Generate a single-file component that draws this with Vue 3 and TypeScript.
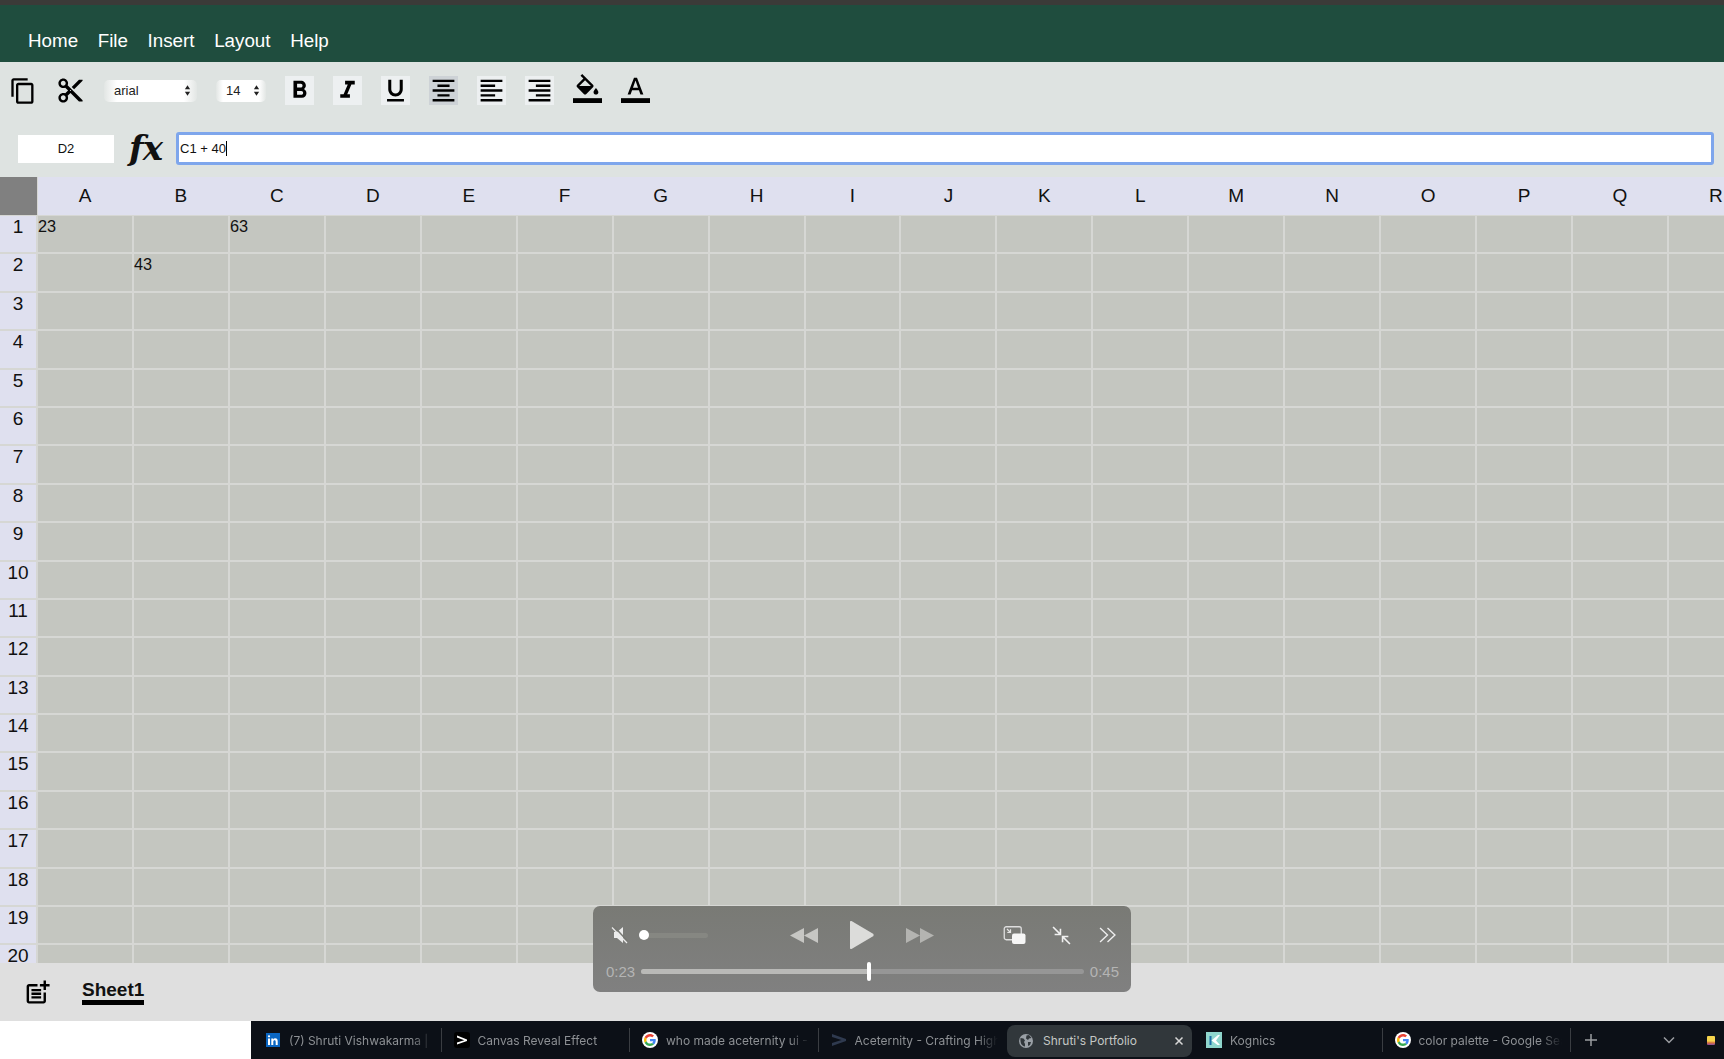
<script setup lang="ts">
const menus = ['Home', 'File', 'Insert', 'Layout', 'Help']

const toolButtons = [
  { name: 'bold', d: 'M15.6 10.79c.97-.67 1.65-1.77 1.65-2.79 0-2.26-1.75-4-4-4H7v14h7.04c2.09 0 3.71-1.7 3.71-3.79 0-1.52-.86-2.82-2.15-3.42zM10 6.5h3c.83 0 1.5.67 1.5 1.5s-.67 1.5-1.5 1.5h-3v-3zm3.5 9H10v-3h3.5c.83 0 1.5.67 1.5 1.5s-.67 1.5-1.5 1.5z' },
  { name: 'italic', d: 'M10 4v3h2.21l-3.42 8H6v3h8v-3h-2.21l3.42-8H18V4z' },
  { name: 'underline', d: 'M12 17c3.31 0 6-2.69 6-6V3h-2.5v8c0 1.93-1.57 3.5-3.5 3.5S8.5 12.93 8.5 11V3H6v8c0 3.31 2.69 6 6 6zm-7 2v2h14v-2H5z' },
  { name: 'center', active: true, d: 'M7 15v2h10v-2H7zm-4 6h18v-2H3v2zm0-8h18v-2H3v2zm4-6v2h10V7H7zM3 3v2h18V3H3z' },
  { name: 'left', d: 'M15 15H3v2h12v-2zm0-8H3v2h12V7zM3 13h18v-2H3v2zm0 8h18v-2H3v2zM3 3v2h18V3H3z' },
  { name: 'right', d: 'M3 21h18v-2H3v2zm6-4h12v-2H9v2zm-6-4h18v-2H3v2zm6-4h12V7H9v2zM3 3v2h18V3H3z' },
]

const columns = 'ABCDEFGHIJKLMNOPQRS'.split('')
const rows = Array.from({ length: 21 }, (_, i) => i + 1)
const values: Record<string, string> = { A1: '23', C1: '63', B2: '43' }

const tabs = [
  { title: '(7) Shruti Vishwakarma | LinkedIn', icon: 'linkedin', sep: true },
  { title: 'Canvas Reveal Effect', icon: 'canvas', sep: true },
  { title: 'who made aceternity ui - Google', icon: 'google', sep: true },
  { title: 'Aceternity - Crafting High Quality', icon: 'aceternity', sep: false },
  { title: "Shruti's Portfolio", icon: 'globe', sep: false, active: true },
  { title: 'Kognics', icon: 'kognics', sep: true },
  { title: 'color palette - Google Search', icon: 'google', sep: true },
]
</script>

<template>
  <div class="page">
    <div class="top-strip" />
    <nav class="menu">
      <span v-for="item in menus" :key="item">{{ item }}</span>
    </nav>

    <section class="toolbar">
      <div class="tools">
        <svg class="tool-icon" viewBox="0 0 24 24"><path d="M16 1H4c-1.1 0-2 .9-2 2v14h2V3h12V1zm3 4H8c-1.1 0-2 .9-2 2v14c0 1.1.9 2 2 2h11c1.1 0 2-.9 2-2V7c0-1.1-.9-2-2-2zm0 16H8V7h11v14z" /></svg>
        <svg class="tool-icon cut" viewBox="0 0 24 24"><path d="M9.64 7.64c.23-.5.36-1.05.36-1.64 0-2.21-1.79-4-4-4S2 3.79 2 6s1.79 4 4 4c.59 0 1.14-.13 1.64-.36L10 12l-2.36 2.36C7.14 14.13 6.59 14 6 14c-2.21 0-4 1.79-4 4s1.79 4 4 4 4-1.79 4-4c0-.59-.13-1.14-.36-1.64L12 14l7 7h3v-1L9.64 7.64zM6 8c-1.1 0-2-.89-2-2s.9-2 2-2 2 .89 2 2-.9 2-2 2zm0 12c-1.1 0-2-.89-2-2s.9-2 2-2 2 .89 2 2-.9 2-2 2zm6-7.5c-.28 0-.5-.22-.5-.5s.22-.5.5-.5.5.22.5.5-.22.5-.5.5zM19 3l-6 6 2 2 7-7V3z" /></svg>
        <div class="select font-select">
          <span>arial</span>
          <svg class="stepper" viewBox="0 0 8 14"><path d="M4 1l3 4.5H1zM4 13L1 8.500h6z" /></svg>
        </div>
        <div class="select size-select">
          <span>14</span>
          <svg class="stepper" viewBox="0 0 8 14"><path d="M4 1l3 4.5H1zM4 13L1 8.500h6z" /></svg>
        </div>
        <button
          v-for="btn in toolButtons"
          :key="btn.name"
          class="tool-btn"
          :class="{ active: btn.active }"
        >
          <svg viewBox="0 0 24 24"><path :d="btn.d" /></svg>
        </button>
        <svg class="swatch" viewBox="0 0 24 24">
          <path d="M16.56 8.94L7.62 0 6.21 1.41l2.38 2.38-5.15 5.15c-.59.59-.59 1.54 0 2.12l5.5 5.5c.29.29.68.44 1.06.44s.77-.15 1.06-.44l5.5-5.5c.59-.58.59-1.53 0-2.12zM5.21 10L10 5.21 14.79 10H5.21zM19 11.500s-2 2.170-2 3.500c0 1.100.9 2 2 2s2-.9 2-2c0-1.330-2-3.500-2-3.500z" />
          <path d="M5.210 10h9.580L10 14.790z" />
          <path d="M0 20h24v4H0z" />
        </svg>
        <svg class="swatch" viewBox="0 0 24 24">
          <path d="M0 20h24v4H0z" />
          <path d="M5.490 17h2.420l1.270-3.580h5.650L16.090 17h2.420L13.250 3h-2.500L5.490 17zm4.420-5.610l2.030-5.790h.12l2.030 5.790H9.910z" />
        </svg>
      </div>

      <div class="formula-row">
        <div class="name-box">D2</div>
        <span class="fx">fx</span>
        <div class="formula-input">C1 + 40<i class="caret" /></div>
      </div>
    </section>

    <main class="sheet">
      <div class="corner" />
      <div v-for="col in columns" :key="col" class="col-head">{{ col }}</div>
      <template v-for="row in rows" :key="row">
        <div class="row-head">{{ row }}</div>
        <div v-for="col in columns" :key="col + row" class="cell">{{ values[col + row] }}</div>
      </template>
    </main>

    <footer class="sheet-bar">
      <svg class="add-sheet" viewBox="0 0 24 24">
        <path d="M17 19.220H5V7h7V5H5c-1.100 0-2 .9-2 2v12c0 1.100.9 2 2 2h12c1.100 0 2-.9 2-2v-7h-2v7.220z" />
        <path d="M19 2h-2v3h-3c.01.01 0 2 0 2h3v2.990c.01.01 2 0 2 0V7h3V5h-3V2zM7 9h8v2H7zM7 12v2h8v-2H7zM7 15h8v2H7z" />
      </svg>
      <span class="sheet-name">Sheet1</span>
    </footer>

    <div class="tabs-row">
      <div class="blank" />
      <div class="tabs">
        <template v-for="tab in tabs" :key="tab.title">
          <div class="tab" :class="{ active: tab.active }">
            <svg v-if="tab.icon === 'linkedin'" class="fav" viewBox="0 0 16 16">
              <rect x="1" y="1" width="14" height="14" fill="#0a66c2" />
              <path fill="#fff" d="M3 6.500h2V13H3zM4 3.200a1.150 1.150 0 110 2.300 1.150 1.150 0 010-2.300zM6.300 6.500h1.900v.9c.4-.65 1.100-1.050 2-1.050 1.800 0 2.500 1.100 2.500 2.900V13h-2V9.700c0-.9-.3-1.550-1.100-1.550-.9 0-1.300.65-1.300 1.600V13h-2z" />
            </svg>
            <svg v-else-if="tab.icon === 'canvas'" class="fav" viewBox="0 0 16 16">
              <rect width="16" height="16" rx="3" fill="#000" />
              <path d="M3 3.500L13 7.500v1.500L3 12.500v-2L10.300 8.200 3 5.500z" fill="#fff" />
            </svg>
            <svg v-else-if="tab.icon === 'google'" class="fav" viewBox="-8 -8 64 64">
              <circle cx="24" cy="24" r="32" fill="#fff" />
              <path fill="#EA4335" d="M24 9.500c3.540 0 6.710 1.220 9.210 3.600l6.850-6.850C35.900 2.380 30.470 0 24 0 14.620 0 6.510 5.380 2.560 13.220l7.980 6.190C12.430 13.720 17.740 9.500 24 9.500z" />
              <path fill="#4285F4" d="M46.980 24.550c0-1.570-.15-3.090-.38-4.550H24v9.020h12.940c-.58 2.960-2.260 5.480-4.780 7.180l7.730 6c4.510-4.180 7.090-10.360 7.090-17.650z" />
              <path fill="#FBBC05" d="M10.530 28.590c-.48-1.450-.76-2.990-.76-4.590s.27-3.140.76-4.590l-7.980-6.190C.92 16.460 0 20.120 0 24c0 3.880.92 7.540 2.560 10.780l7.970-6.190z" />
              <path fill="#34A853" d="M24 48c6.480 0 11.930-2.130 15.890-5.810l-7.730-6c-2.150 1.450-4.920 2.300-8.160 2.300-6.260 0-11.570-4.220-13.470-9.910l-7.980 6.190C6.510 42.620 14.620 48 24 48z" />
            </svg>
            <svg v-else-if="tab.icon === 'aceternity'" class="fav" viewBox="0 0 16 16">
              <path d="M1 2l14 5v2L1 14v-3l9.500-3L1 5z" fill="#2f3a4f" />
            </svg>
            <svg v-else-if="tab.icon === 'globe'" class="fav" viewBox="0 0 16 16">
              <circle cx="8" cy="8" r="7" fill="#9aa0a6" />
              <path fill="#31373b" d="M2.500 5l3 .5 1.500 2-1 1.500 1 2v2.500C4 13 2 10.500 2.500 5zM8.500 2.500L11 2l2.500 3-2.500.5-1 1.500-2-1.500zM10 9h3l-1 3-2 1z" />
            </svg>
            <svg v-else class="fav" viewBox="0 0 16 16">
              <rect width="16" height="16" fill="#8fd6cd" />
              <path d="M3.500 4h2v9h-2z" fill="#1c6fa8" />
              <path d="M5.500 8.500L12 3h2L10 8.500l4 4.500h-2.500z" fill="#fff" />
            </svg>
            <span class="tab-title">{{ tab.title }}</span>
            <svg v-if="tab.active" class="tab-close" viewBox="0 0 10 10"><path d="M1.500 1.500l7 7M8.500 1.500l-7 7" /></svg>
          </div>
          <i class="tab-sep" :class="{ hidden: !tab.sep }" />
        </template>
        <svg class="new-tab" viewBox="0 0 12 12"><path d="M6 0v12M0 6h12" /></svg>
        <svg class="tab-menu" viewBox="0 0 12 8"><path d="M1 1.500l5 5 5-5" /></svg>
        <i class="mini-flag" />
      </div>
    </div>

    <div class="player">
      <div class="player-controls">
        <svg class="mute" viewBox="0 0 17 18">
          <path d="M3 6h3l6-5v16l-6-5H3z" fill="#ececec" />
          <path d="M2.500 0l14 15" stroke="#777873" stroke-width="1.500" />
          <path d="M1 1.500l15 15.500" stroke="#ececec" stroke-width="1.200" />
        </svg>
        <div class="volume"><i /></div>
        <svg class="skip back" viewBox="0 0 28 17"><path d="M0 8.500l14-7.500v15zM14 8.500l14-7.500v15z" /></svg>
        <svg class="play" viewBox="0 0 26 30"><path d="M1 2a1 1 0 011.500-.9l22 12.900v2l-22 12.900A1 1 0 011 28z" /></svg>
        <svg class="skip forward" viewBox="0 0 28 17"><path d="M28 8.500L14 1v15zM14 8.500L0 1v15z" /></svg>
        <svg class="pip" viewBox="0 0 22 18">
          <rect x=".75" y=".75" width="17" height="13" rx="2" fill="none" stroke="#dedede" stroke-width="1.300" />
          <rect x="8.500" y="7.500" width="13.500" height="10.500" rx="2" fill="#f6f6f6" />
          <path d="M3.500 3l3 3M7 3.200V6.500H3.800" fill="none" stroke="#e4e4e4" stroke-width="1.200" />
        </svg>
        <svg class="shrink" viewBox="0 0 18 18">
          <path d="M1 1l6.500 6.500M8 2.500V8H2.500M17 17l-6.500-6.500M10 15.500V10h5.500" fill="none" stroke="#f0f0f0" stroke-width="1.500" />
        </svg>
        <svg class="more" viewBox="0 0 16 15"><path d="M1 1l7 6.500-7 6.500M8 1l7 6.500-7 6.500" fill="none" stroke="#eee" stroke-width="1.300" /></svg>
      </div>
      <div class="player-time">
        <span>0:23</span>
        <div class="track"><i class="played" /><i class="thumb" /></div>
        <span>0:45</span>
      </div>
    </div>
  </div>
</template>

<style>
html,
body {
  margin: 0;
  background: #fff;
}
</style>

<style scoped>
.page {
  position: relative;
  display: flex;
  flex-direction: column;
  width: 1724px;
  height: 1059px;
  overflow: hidden;
  font-family: 'Liberation Sans', Arial, sans-serif;
  color: #111;
}

.top-strip {
  height: 5px;
  flex: none;
  background: #3b3a38;
}

.menu {
  display: flex;
  flex: none;
  gap: 19.600px;
  align-items: center;
  height: 57px;
  padding: 14px 0 0 28px;
  box-sizing: border-box;
  background: #1f4d3e;
  color: #fff;
  font-size: 18.800px;
}

.toolbar {
  flex: none;
  height: 115px;
  padding-top: 14px;
  box-sizing: border-box;
  background: #dee3e1;
}

.tools {
  display: flex;
  gap: 19px;
  align-items: center;
  height: 29px;
  padding-left: 9px;
}

.tool-icon {
  width: 28px;
  height: 28px;
}

.tool-icon.cut {
  width: 29px;
  height: 29px;
}

.select {
  display: flex;
  align-items: center;
  justify-content: space-between;
  height: 22px;
  padding: 0 6px 0 10px;
  box-sizing: border-box;
  border-radius: 5px;
  background: linear-gradient(90deg, #e2e6e4, #fff 14%, #fff 86%, #e2e6e4);
  font-size: 13px;
  color: #222;
}

.font-select {
  width: 93px;
}

.size-select {
  width: 50px;
}

.stepper {
  width: 7px;
  height: 13px;
  fill: #222;
}

.tool-btn {
  width: 29px;
  height: 29px;
  padding: 0;
  border: 0;
  background: #edf0f1;
}

.tool-btn.active {
  background: #cdd2d6;
}

.tool-btn svg {
  display: block;
  width: 29px;
  height: 29px;
}

.swatch {
  width: 29px;
  height: 29px;
  margin-top: -4px;
}

.formula-row {
  display: flex;
  align-items: center;
  height: 33px;
  margin-top: 27px;
}

.name-box {
  width: 96px;
  height: 28px;
  margin-left: 18px;
  background: #fff;
  font-size: 13px;
  line-height: 28px;
  text-align: center;
}

.fx {
  width: 38px;
  margin: 0 9px 0 15px;
  font-family: 'DejaVu Serif', serif;
  font-size: 34px;
  font-style: italic;
  font-weight: 700;
  line-height: 33px;
  letter-spacing: -1px;
}

.formula-input {
  display: flex;
  align-items: center;
  width: 1538px;
  height: 33px;
  padding-left: 1px;
  box-sizing: border-box;
  border: 3px solid #7ea6ec;
  border-radius: 3px;
  background: #fff;
  font-size: 13px;
}

.caret {
  width: 1px;
  height: 15px;
  background: #000;
}

.sheet {
  display: grid;
  flex: 1;
  grid-template-columns: 38px repeat(19, 95.940px);
  grid-auto-rows: 38.400px;
  grid-template-rows: 39px;
  min-height: 0;
  overflow: hidden;
  background: #d6d7d4;
}

.corner {
  background: #808080;
  border-bottom: 1px solid #d6d7d4;
  margin-right: 1px;
}

.col-head {
  padding-right: 2px;
  background: #dfe0ef;
  border-bottom: 1px solid #d6d7d4;
  font-size: 19px;
  line-height: 38px;
  text-align: center;
}

.row-head {
  margin-right: 2px;
  border-bottom: 2px solid #d6d7d4;
  background: #dfe0ef;
  font-size: 19px;
  line-height: 22px;
  text-align: center;
}

.cell {
  border-right: 2px solid #d6d7d4;
  border-bottom: 2px solid #d6d7d4;
  background: #c4c6c0;
  font-size: 16.300px;
  line-height: 21px;
  white-space: nowrap;
}

.sheet-bar {
  display: flex;
  flex: none;
  gap: 30px;
  align-items: center;
  height: 58px;
  padding-left: 23px;
  box-sizing: border-box;
  background: #dfdfdf;
}

.add-sheet {
  width: 29px;
  height: 29px;
}

.sheet-name {
  margin-top: 1px;
  border-bottom: 5px solid #000;
  font-size: 19px;
  font-weight: 700;
  line-height: 20px;
}

.tabs-row {
  display: flex;
  flex: none;
  height: 38px;
}

.blank {
  width: 251px;
  background: #fff;
}

.tabs {
  display: flex;
  flex: 1;
  align-items: center;
  padding-left: 2px;
  background: #0c1017;
  font-family: Inter, sans-serif;
  font-size: 12px;
}

.tab {
  display: flex;
  flex: none;
  align-items: center;
  width: 187.500px;
  height: 32px;
  padding: 0 8px 0 12px;
  box-sizing: border-box;
  border-radius: 8px;
  color: #8d9094;
}

.tab.active {
  width: 185px;
  margin: 1px 1px 0 0;
  padding: 0 8px 0 11px;
  background: #31373b;
  color: #c4c7c5;
}

.tab.active .fav {
  margin-right: 9px;
}

.fav {
  flex: none;
  width: 16px;
  height: 16px;
  margin-right: 8px;
}

.tab-title {
  flex: 1;
  overflow: hidden;
  white-space: nowrap;
  -webkit-mask-image: linear-gradient(90deg, #000 85%, transparent);
  mask-image: linear-gradient(90deg, #000 85%, transparent);
}

.tab.active .tab-title {
  -webkit-mask-image: none;
  mask-image: none;
}

.tab-close {
  flex: none;
  width: 10px;
  height: 10px;
  stroke: #d8d8d8;
  stroke-width: 1.500;
}

.tab-sep {
  flex: none;
  width: 1px;
  height: 24px;
  background: #3a3d42;
}

.tab-sep.hidden {
  background: transparent;
}

.new-tab {
  flex: none;
  width: 12px;
  height: 12px;
  margin-left: 14px;
  stroke: #9b9da1;
  stroke-width: 1.500;
}

.tab-menu {
  flex: none;
  width: 12px;
  height: 8px;
  margin-left: 66px;
  fill: none;
  stroke: #9b9da1;
  stroke-width: 1.500;
}

.mini-flag {
  flex: none;
  width: 8px;
  height: 9px;
  margin-left: 32px;
  border-radius: 1px;
  background: linear-gradient(#f6d44c 55%, #d8733c 75%, #8a4aa0);
}

.player {
  position: absolute;
  top: 906px;
  left: 593px;
  width: 538px;
  height: 86px;
  border-radius: 7px;
  background: linear-gradient(#797a75, #808080);
}

.player-controls {
  display: flex;
  align-items: center;
  height: 30px;
  margin-top: 14px;
  padding-left: 18px;
}

.mute {
  flex: none;
  width: 17px;
  height: 18px;
}

.volume {
  flex: none;
  width: 69px;
  height: 5px;
  margin-left: 11px;
  border-radius: 3px;
  background: #868782;
}

.volume i {
  display: block;
  width: 10px;
  height: 10px;
  margin-top: -2.500px;
  border-radius: 50%;
  background: #fff;
}

.skip {
  flex: none;
  width: 28px;
  height: 17px;
  fill: #c6c6c3;
}

.skip.back {
  margin-left: 82px;
}

.skip.forward {
  fill: #b4b4b1;
}

.play {
  flex: none;
  width: 26px;
  height: 30px;
  margin: 0 31px 0 31px;
  fill: #dcdcda;
}

.pip {
  flex: none;
  width: 23px;
  height: 18px;
  margin-left: 69px;
}

.shrink {
  flex: none;
  width: 19px;
  height: 19px;
  margin-left: 26px;
}

.more {
  flex: none;
  width: 17px;
  height: 16px;
  margin-left: 28px;
}

.player-time {
  display: flex;
  align-items: center;
  gap: 6px;
  margin-top: 13px;
  padding: 0 12px 0 13px;
  color: #b4b4b4;
  font-size: 15px;
}

.track {
  display: flex;
  flex: 1;
  align-items: center;
  height: 5px;
  border-radius: 3px;
  background: #969696;
}

.played {
  width: 226px;
  height: 5px;
  border-radius: 3px 0 0 3px;
  background: #b9b9b7;
}

.thumb {
  width: 4px;
  height: 19px;
  border-radius: 2px;
  background: #fff;
}
</style>
